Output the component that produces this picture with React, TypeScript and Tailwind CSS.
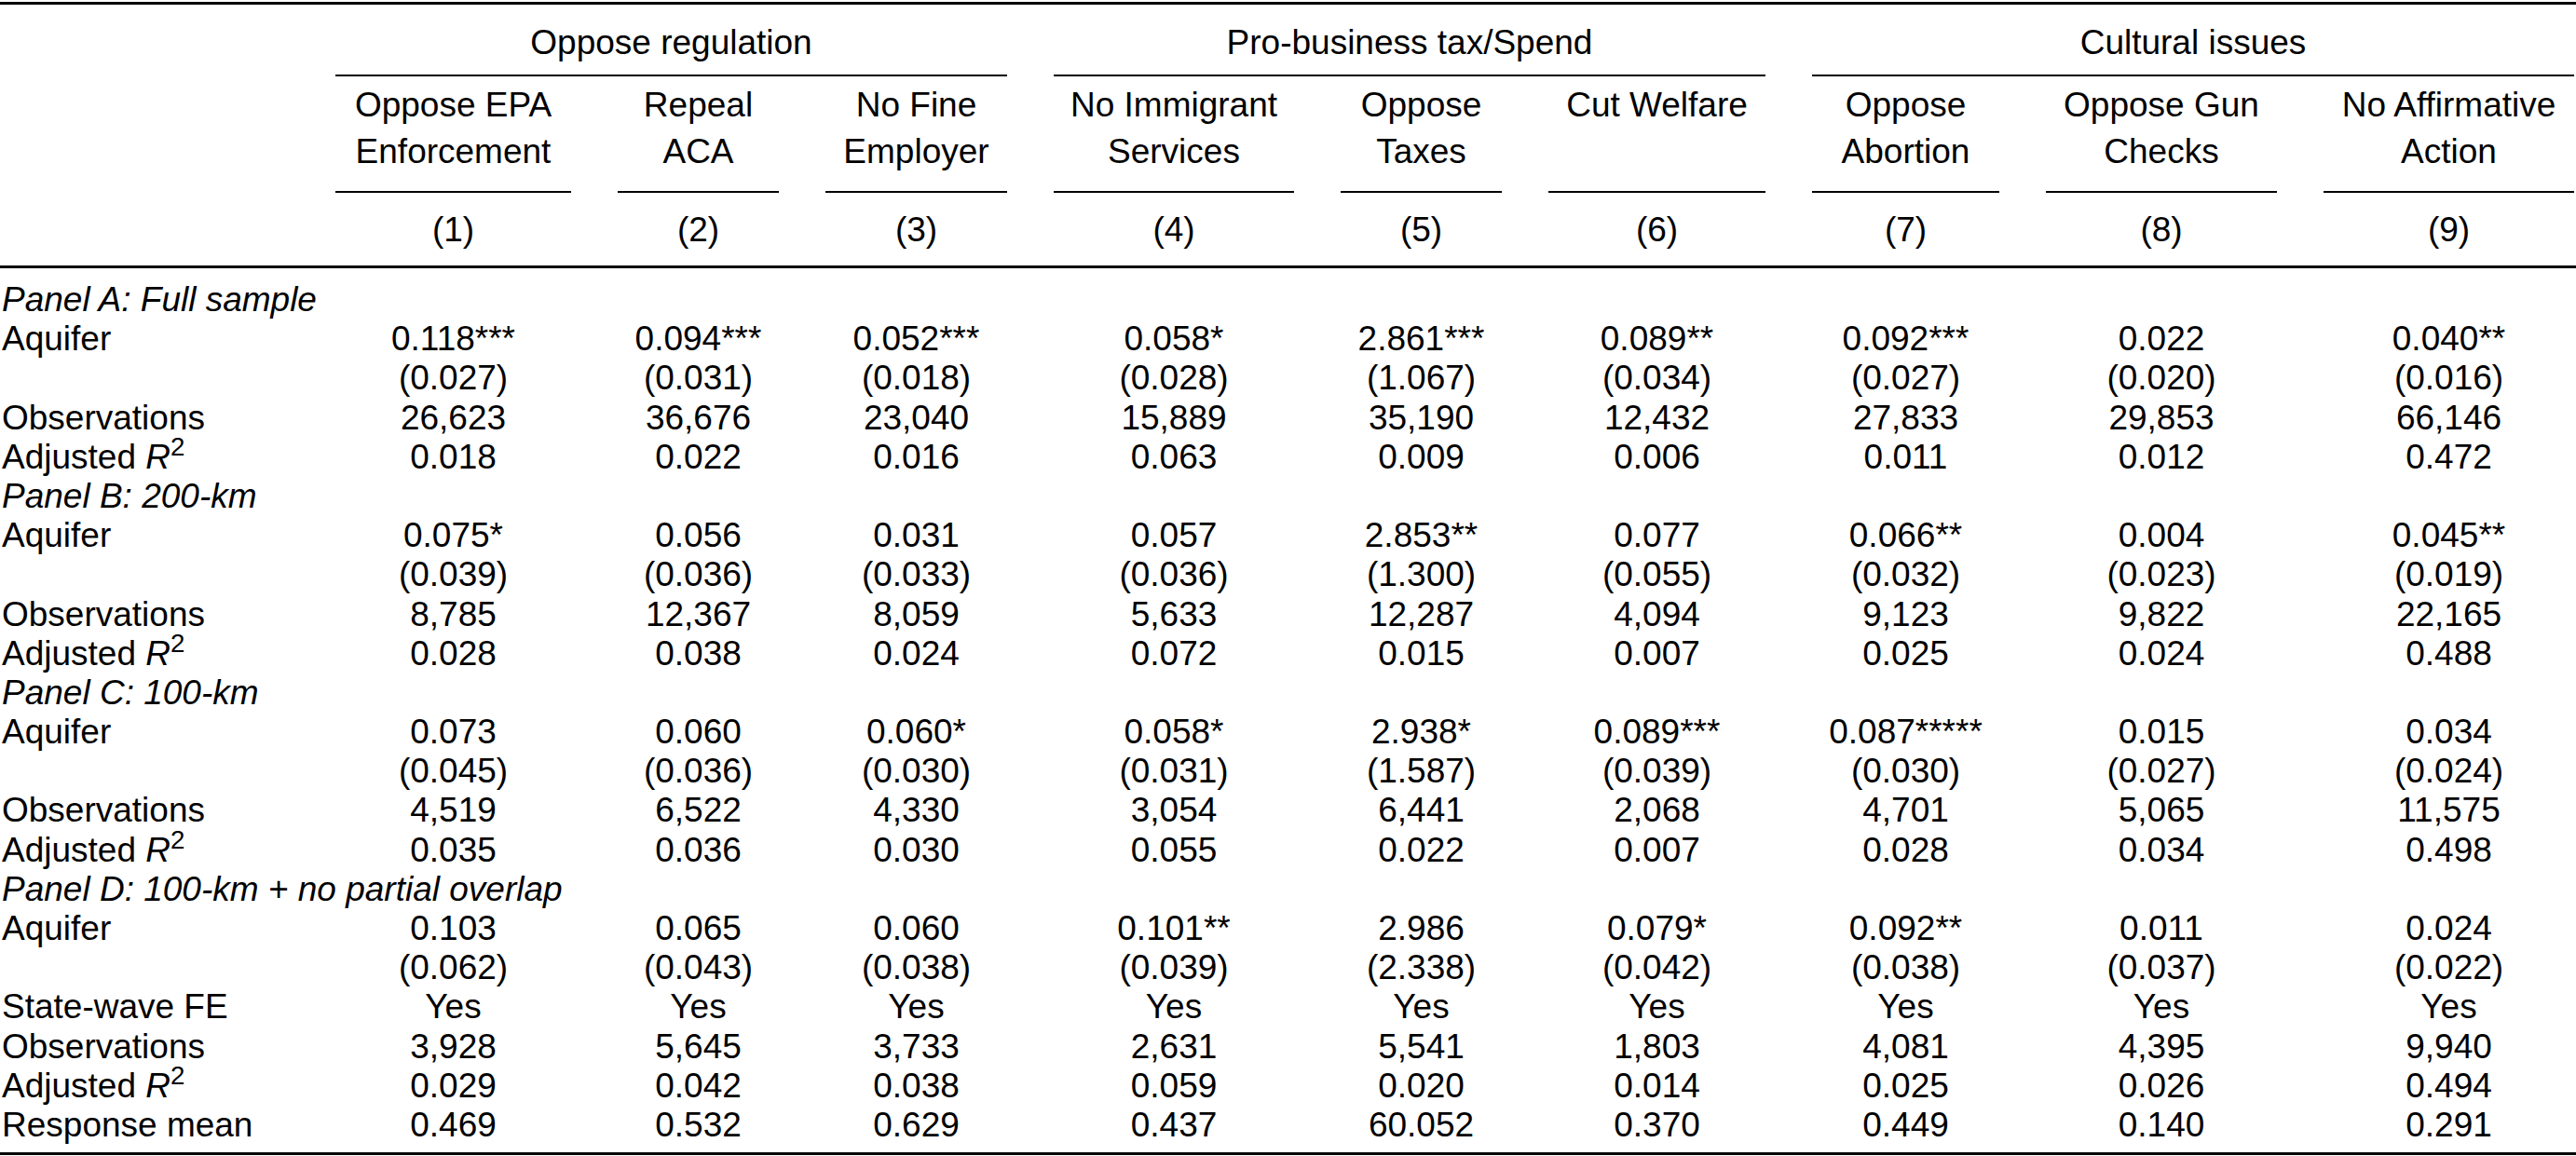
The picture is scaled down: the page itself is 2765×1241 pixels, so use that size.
import type { ReactNode } from "react";

const cols = "grid grid-cols-[335px_303px_223px_245px_308px_223px_283px_251px_298px_1fr]";

const groups = ["Oppose regulation", "Pro-business tax/Spend", "Cultural issues"];

const heads: [string, string][] = [
  ["Oppose EPA", "Enforcement"],
  ["Repeal", "ACA"],
  ["No Fine", "Employer"],
  ["No Immigrant", "Services"],
  ["Oppose", "Taxes"],
  ["Cut Welfare", ""],
  ["Oppose", "Abortion"],
  ["Oppose Gun", "Checks"],
  ["No Affirmative", "Action"],
];

type Row = { label: ReactNode; cells?: string[]; panel?: boolean };

const r2 = (
  <>
    Adjusted <i>R</i>
    <sup>2</sup>
  </>
);

const rows: Row[] = [
  { label: "Panel A: Full sample", panel: true },
  { label: "Aquifer", cells: ["0.118***", "0.094***", "0.052***", "0.058*", "2.861***", "0.089**", "0.092***", "0.022", "0.040**"] },
  { label: "", cells: ["(0.027)", "(0.031)", "(0.018)", "(0.028)", "(1.067)", "(0.034)", "(0.027)", "(0.020)", "(0.016)"] },
  { label: "Observations", cells: ["26,623", "36,676", "23,040", "15,889", "35,190", "12,432", "27,833", "29,853", "66,146"] },
  { label: r2, cells: ["0.018", "0.022", "0.016", "0.063", "0.009", "0.006", "0.011", "0.012", "0.472"] },
  { label: "Panel B: 200-km", panel: true },
  { label: "Aquifer", cells: ["0.075*", "0.056", "0.031", "0.057", "2.853**", "0.077", "0.066**", "0.004", "0.045**"] },
  { label: "", cells: ["(0.039)", "(0.036)", "(0.033)", "(0.036)", "(1.300)", "(0.055)", "(0.032)", "(0.023)", "(0.019)"] },
  { label: "Observations", cells: ["8,785", "12,367", "8,059", "5,633", "12,287", "4,094", "9,123", "9,822", "22,165"] },
  { label: r2, cells: ["0.028", "0.038", "0.024", "0.072", "0.015", "0.007", "0.025", "0.024", "0.488"] },
  { label: "Panel C: 100-km", panel: true },
  { label: "Aquifer", cells: ["0.073", "0.060", "0.060*", "0.058*", "2.938*", "0.089***", "0.087*****", "0.015", "0.034"] },
  { label: "", cells: ["(0.045)", "(0.036)", "(0.030)", "(0.031)", "(1.587)", "(0.039)", "(0.030)", "(0.027)", "(0.024)"] },
  { label: "Observations", cells: ["4,519", "6,522", "4,330", "3,054", "6,441", "2,068", "4,701", "5,065", "11,575"] },
  { label: r2, cells: ["0.035", "0.036", "0.030", "0.055", "0.022", "0.007", "0.028", "0.034", "0.498"] },
  { label: "Panel D: 100-km + no partial overlap", panel: true },
  { label: "Aquifer", cells: ["0.103", "0.065", "0.060", "0.101**", "2.986", "0.079*", "0.092**", "0.011", "0.024"] },
  { label: "", cells: ["(0.062)", "(0.043)", "(0.038)", "(0.039)", "(2.338)", "(0.042)", "(0.038)", "(0.037)", "(0.022)"] },
  { label: "State-wave FE", cells: Array(9).fill("Yes") },
  { label: "Observations", cells: ["3,928", "5,645", "3,733", "2,631", "5,541", "1,803", "4,081", "4,395", "9,940"] },
  { label: r2, cells: ["0.029", "0.042", "0.038", "0.059", "0.020", "0.014", "0.025", "0.026", "0.494"] },
  { label: "Response mean", cells: ["0.469", "0.532", "0.629", "0.437", "60.052", "0.370", "0.449", "0.140", "0.291"] },
];

const pad = (i: number) => (i === 8 ? "pl-[25px] pr-[2px]" : "px-[25px]");

export default function App() {
  return (
    <div className="w-[2765px] h-[1241px] bg-white text-black text-[37px] font-['Liberation_Sans',Arial,sans-serif] overflow-hidden">
      <div className="mt-[2px] h-[3px] bg-black" />

      {/* group headers */}
      <div className={cols}>
        <div />
        {groups.map((g, i) => (
          <div key={g} className={`col-span-3 ${i === 2 ? "pl-[25px] pr-[2px]" : "px-[25px]"}`}>
            <div className="h-[77px] flex items-center justify-center border-b-2 border-black pt-[6px]">{g}</div>
          </div>
        ))}

        {/* column titles */}
        <div />
        {heads.map(([a, b], i) => (
          <div key={i} className={pad(i)}>
            <div className="h-[125px] pt-[6px] border-b-2 border-black text-center leading-[50px] whitespace-nowrap">
              <div>{a}</div>
              <div>{b}</div>
            </div>
          </div>
        ))}

        {/* numbers */}
        <div />
        {heads.map((_, i) => (
          <div key={i} className={`${pad(i)} h-[78px] pt-[19px] leading-[42px] text-center`}>
            ({i + 1})
          </div>
        ))}
      </div>

      <div className="h-[3px] bg-black" />

      <div className={`${cols} pt-[13px]`}>
        {rows.map((r, ri) =>
          r.panel ? (
            <div key={ri} className="col-span-10 h-[42.2px] leading-[42.2px] pl-[2px] italic whitespace-nowrap">
              {r.label}
            </div>
          ) : (
            <div key={ri} className="contents">
              <div className="h-[42.2px] leading-[42.2px] pl-[2px] whitespace-nowrap">{r.label}</div>
              {r.cells!.map((c, ci) => (
                <div key={ci} className={`${pad(ci)} h-[42.2px] leading-[42.2px] text-center whitespace-nowrap`}>
                  {c}
                </div>
              ))}
            </div>
          )
        )}
      </div>

      <div className="mt-[8px] h-[3px] bg-black" />
    </div>
  );
}
